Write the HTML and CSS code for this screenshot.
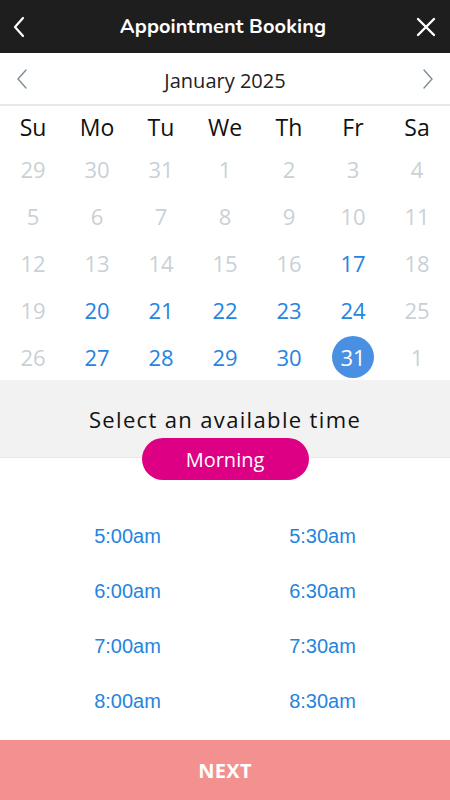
FILE: index.html
```html
<!DOCTYPE html>
<html lang="en">
<head>
    <meta charset="UTF-8">
    <meta name="viewport" content="width=device-width, initial-scale=1.0">
    <title>Appointment Booking</title>
    <link rel="stylesheet" href="styles.css">
</head>
<body>
    <div class="app">
        <header class="top-bar">
            <button class="icon-btn" aria-label="Back">
                <svg width="22" height="22" viewBox="0 0 22 22" fill="none" stroke="#fff" stroke-width="2.2" stroke-linecap="round" stroke-linejoin="round"><polyline points="14,2 6,11 14,20"></polyline></svg>
            </button>
            <h1>Appointment Booking</h1>
            <button class="icon-btn" aria-label="Close">
                <svg width="22" height="22" viewBox="0 0 22 22" fill="none" stroke="#fff" stroke-width="2.4" stroke-linecap="round"><line x1="3" y1="3" x2="19" y2="19"></line><line x1="19" y1="3" x2="3" y2="19"></line></svg>
            </button>
        </header>

        <div class="month-nav">
            <button class="nav-btn" aria-label="Previous month">
                <svg width="14" height="20" viewBox="0 0 14 20" fill="none" stroke="#7d8c97" stroke-width="1.4" stroke-linecap="round"><polyline points="11,1 3,10 11,19"></polyline></svg>
            </button>
            <div class="month-title">January 2025</div>
            <button class="nav-btn" aria-label="Next month">
                <svg width="14" height="20" viewBox="0 0 14 20" fill="none" stroke="#7d8c97" stroke-width="1.4" stroke-linecap="round"><polyline points="3,1 11,10 3,19"></polyline></svg>
            </button>
        </div>

        <div class="weekdays">
            <span>Su</span><span>Mo</span><span>Tu</span><span>We</span><span>Th</span><span>Fr</span><span>Sa</span>
        </div>

        <div class="days" id="days"></div>

        <div class="time-head">
            <div class="time-title">Select an available time</div>
            <button class="period-pill">Morning</button>
        </div>

        <div class="slots">
            <button class="slot">5:00am</button>
            <button class="slot">5:30am</button>
            <button class="slot">6:00am</button>
            <button class="slot">6:30am</button>
            <button class="slot">7:00am</button>
            <button class="slot">7:30am</button>
            <button class="slot">8:00am</button>
            <button class="slot">8:30am</button>
        </div>

        <button class="next-btn">NEXT</button>
    </div>

    <script>
        const daysEl = document.getElementById('days');
        const available = [17, 20, 21, 22, 23, 24, 27, 28, 29, 30, 31];
        const selected = 31;

        const cells = [];
        [29, 30, 31].forEach(d => cells.push({ day: d, muted: true }));
        for (let d = 1; d <= 31; d++) {
            cells.push({ day: d, muted: !available.includes(d) });
        }
        cells.push({ day: 1, muted: true });

        cells.forEach((cell, i) => {
            const el = document.createElement('span');
            el.className = 'day';
            // first and last cells belong to the neighbouring months
            const outside = i < 3 || i === cells.length - 1;
            if (cell.muted || outside) {
                el.classList.add('muted');
            } else if (cell.day === selected) {
                el.classList.add('selected');
            } else {
                el.classList.add('open');
            }
            el.innerHTML = `<span class="num">${cell.day}</span>`;
            daysEl.appendChild(el);
        });
    </script>
</body>
</html>
```

FILE: styles.css
```css
* {
    margin: 0;
    padding: 0;
    box-sizing: border-box;
}

body {
    font-family: 'Open Sans', 'Noto Sans', sans-serif;
    background: #fff;
    color: #111;
}

button {
    border: none;
    background: none;
    font-family: inherit;
    cursor: pointer;
}

.app {
    width: 450px;
    height: 800px;
    display: flex;
    flex-direction: column;
    overflow: hidden;
}

.app > * {
    flex-shrink: 0;
}

.top-bar {
    height: 53px;
    background: #1e1e1e;
    display: flex;
    align-items: center;
    justify-content: space-between;
    padding: 0 12px 0 8px;
}

.top-bar h1 {
    color: #fff;
    font-family: 'Nunito', 'Open Sans', sans-serif;
    font-size: 20px;
    font-weight: 700;
    letter-spacing: 0.1px;
}

.icon-btn {
    width: 24px;
    height: 24px;
    display: flex;
    align-items: center;
    justify-content: center;
}

.month-nav {
    height: 53px;
    display: flex;
    align-items: center;
    justify-content: space-between;
    padding: 0 14px;
    border-bottom: 2px solid #e3e8eb;
}

.nav-btn {
    width: 16px;
    height: 22px;
    display: flex;
    align-items: center;
    justify-content: center;
}

.month-title {
    font-size: 20px;
    color: #222;
    padding-top: 4px;
}

.weekdays,
.days {
    display: grid;
    grid-template-columns: repeat(7, 64px);
    padding: 0 1px;
}

.weekdays {
    height: 39px;
    align-items: center;
    text-align: center;
    font-size: 23px;
    color: #111;
    padding-top: 2px;
}

.day {
    height: 47px;
    display: flex;
    align-items: center;
    justify-content: center;
    font-size: 22px;
}

.day .num {
    width: 42px;
    height: 42px;
    display: flex;
    align-items: center;
    justify-content: center;
    border-radius: 50%;
}

.day.muted {
    color: #c9d1d5;
}

.day.open {
    color: #2584de;
}

.day.selected .num {
    background: #4a90e2;
    color: #fff;
}

.time-head {
    background: #f2f2f2;
    border-bottom: 1px solid #e6e8ea;
    height: 78px;
    display: flex;
    flex-direction: column;
    align-items: center;
    padding-top: 24px;
}

.time-title {
    font-size: 22px;
    letter-spacing: 1.35px;
    color: #111;
    line-height: 30px;
}

.period-pill {
    flex-shrink: 0;
    margin-top: 4px;
    width: 167px;
    height: 42px;
    border-radius: 21px;
    background: #dd0084;
    color: #fff;
    font-size: 20px;
    position: relative;
}

.slots {
    display: grid;
    grid-template-columns: 1fr 1fr;
    grid-auto-rows: 55px;
    padding: 51px 30px 0 30px;
}

.slot {
    font-family: 'Liberation Sans', Arial, sans-serif;
    font-size: 20px;
    color: #2584de;
    text-align: center;
}

.next-btn {
    margin-top: auto;
    height: 60px;
    width: 100%;
    background: #f39190;
    color: #fff;
    font-size: 20px;
    font-weight: 700;
    letter-spacing: 0.3px;
}
```
